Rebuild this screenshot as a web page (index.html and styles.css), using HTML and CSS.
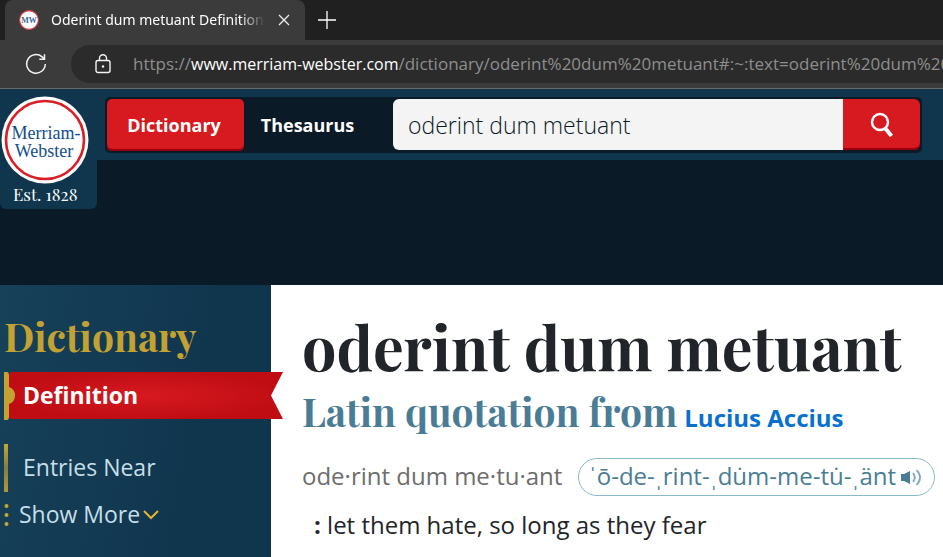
FILE: index.html
```html
<!DOCTYPE html>
<html lang="en">
<head>
<meta charset="utf-8">
<title>Oderint dum metuant Definition</title>
<link rel="stylesheet" href="styles.css">
</head>
<body>
<div class="browser">
  <div class="tabstrip">
    <div class="tab">
      <svg class="favicon" viewBox="0 0 20 20" aria-hidden="true"><circle cx="10" cy="10" r="9.4" fill="#fff" stroke="#d8393e" stroke-width="1.1"/><text class="favicon-text" x="10" y="12.8" text-anchor="middle">MW</text></svg>
      <span class="tab-title">Oderint dum metuant Definition</span>
      <button class="icon-button" aria-label="Close tab"><svg width="12" height="12" viewBox="0 0 12 12"><path d="M1 1l10 10M11 1L1 11" stroke="#eee" stroke-width="1.3"/></svg></button>
    </div>
    <button class="icon-button new-tab" aria-label="New tab"><svg width="18" height="18" viewBox="0 0 18 18"><path d="M9 0v18M0 9h18" stroke="#fff" stroke-width="1.3"/></svg></button>
  </div>
  <div class="toolbar">
    <button class="icon-button reload" aria-label="Reload"><svg width="22" height="22" viewBox="0 0 22 22" fill="none" stroke="#f4f4f4" stroke-width="1.5"><path d="M20.3 11a9.3 9.3 0 1 1-3.2-7.1l2.2 2"/><path d="M19.5 1.2v5h-5.2"/></svg></button>
    <div class="address">
      <svg class="lock" width="16" height="20" viewBox="0 0 16 20" fill="none" stroke="#f4f4f4" stroke-width="1.4"><rect x="1" y="6.5" width="14" height="12" rx="2"/><path d="M4.5 6.500V4.300a3.500 3.500 0 0 1 7 0v2.200"/><circle cx="8" cy="12.500" r="1.200" fill="#f4f4f4" stroke="none"/></svg>
      <div class="url" role="textbox" aria-label="Address" contenteditable="true" spellcheck="false">https://<span class="host">www.merriam-webster.com</span>/dictionary/oderint%20dum%20metuant#:~:text=oderint%20dum%20</div>
    </div>
  </div>
</div>

<header class="site-header">
  <a class="brand" href="#">
    <svg class="seal" viewBox="0 0 88 88" aria-label="Merriam-Webster"><circle cx="44" cy="44" r="43.500" fill="#fff"/><circle cx="44" cy="44" r="39" fill="#fff" stroke="#da1d26" stroke-width="2.600"/><text class="seal-text" x="45" y="43" text-anchor="middle">Merriam-</text><text class="seal-text" x="43" y="61" text-anchor="middle">Webster</text></svg>
    <span class="est">Est. 1828</span>
  </a>
  <form class="search-bar">
    <button type="button" class="mode active">Dictionary</button>
    <button type="button" class="mode">Thesaurus</button>
    <input class="query" type="text" aria-label="Search" value="oderint dum metuant" spellcheck="false">
    <button type="button" class="go" aria-label="Search"><svg width="24" height="26" viewBox="0 0 24 26" fill="none" stroke="#fff"><circle cx="10" cy="10" r="8" stroke-width="2.400"/><path d="M15 16l6.500 8" stroke-width="4"/></svg></button>
  </form>
</header>
<div class="band"></div>

<div class="page">
  <nav class="sidebar">
    <h2 class="side-title">Dictionary</h2>
    <a class="ribbon" href="#"><svg class="ribbon-shape" viewBox="0 0 280 48" preserveAspectRatio="none" aria-hidden="true"><defs><radialGradient id="red"><stop offset="0" stop-color="#d71920"/><stop offset="1" stop-color="#c00d14"/></radialGradient></defs><path d="M5 2Q6 0 9 0H279L267 23.500L279 47H9Q6 47 5 45z" fill="url(#red)"/><path d="M0 0h3q2 0 2 4v11a9 9 0 0 1 0 17v12q0 4-2 4H0z" fill="#c3a232"/></svg><span class="ribbon-label">Definition</span></a>
    <a class="side-link" href="#">Entries Near</a>
    <button class="show-more"><svg width="5" height="24" viewBox="0 0 5 24" fill="#c9a832"><circle cx="2.500" cy="3" r="2"/><circle cx="2.500" cy="12" r="2"/><circle cx="2.500" cy="21" r="2"/></svg><span class="more-label">Show More</span><svg width="16" height="10" viewBox="0 0 16 10" fill="none" stroke="#e0b72e" stroke-width="2"><path d="M1 1l7 7 7-7"/></svg></button>
  </nav>
  <main class="entry">
    <h1 class="headword">oderint dum metuant</h1>
    <div class="origin"><h2 class="part">Latin quotation from</h2><a class="author" href="#">Lucius Accius</a></div>
    <div class="says"><span class="syllables">ode·rint dum me·tu·ant</span><button class="pron"><span>ˈō-de-ˌrint-ˌdu̇m-me-tu̇-ˌänt</span><svg width="21" height="18" viewBox="0 0 21 18" fill="none" stroke="#7fa7ba" stroke-width="1.800"><path d="M0 6h3l6-3v13l-6-3H0z" fill="#4a7d95" stroke="none"/><path d="M12 5q3.500 4.500 0 9M15.500 2q7 7.500 0 15"/></svg></button></div>
    <p class="sense"><strong>:</strong> let them hate, so long as they fear</p>
  </main>
</div>
</body>
</html>
```
FILE: styles.css
```css
* { box-sizing: border-box; }
body { margin: 0; min-height: 100vh; display: flex; flex-direction: column; background: #0a1a26; font-family: "Open Sans", sans-serif; }
button { margin: 0; padding: 0; border: 0; background: none; font-family: inherit; cursor: pointer; }
a { text-decoration: none; }
h1, h2, p { margin: 0; }
svg { flex: none; }

.tabstrip { height: 40px; display: flex; align-items: center; background: #202020; }
.tab { width: 300px; height: 40px; margin-left: 5px; padding: 0 14px; display: flex; align-items: center; border-radius: 8px 8px 0 0; background: #3b3b3b; }
.favicon { width: 20px; height: 20px; }
.favicon-text { font: bold 8px "Liberation Serif", serif; fill: #40698d; }
.tab-title { width: 214px; margin-left: 12px; font-family: "Noto Sans", sans-serif; font-size: 14px; line-height: 20px; white-space: nowrap; overflow: hidden; color: #fff; -webkit-mask-image: linear-gradient(90deg, #000 88%, transparent); mask-image: linear-gradient(90deg, #000 88%, transparent); }
.icon-button { display: grid; place-items: center; }
.tab .icon-button { margin-left: 13px; }
.new-tab { margin-left: 13px; }
.toolbar { height: 49px; display: flex; align-items: center; border-bottom: 1px solid #686868; background: #3b3b3b; }
.reload { margin-left: 25px; }
.address { flex: 1; min-width: 0; height: 38px; margin-left: 24px; padding-left: 24px; display: flex; align-items: center; gap: 22px; overflow: hidden; border-radius: 19px 0 0 19px; background: #2b2b2b; }
.url { font-size: 17px; line-height: 24px; white-space: nowrap; color: #8e8e8e; }
.host { font-size: 16px; color: #fff; }

.site-header { position: relative; padding: 8px 21px 7px 105px; background: #10364e; }
.brand { position: absolute; top: 0; left: 0; width: 97px; height: 120px; padding-top: 7px; display: flex; flex-direction: column; border-radius: 0 0 6px 6px; background: #10364e; }
.seal { width: 88px; height: 88px; margin-left: 1px; }
.seal-text { font: 18px "Liberation Serif", serif; fill: #134d8e; }
.est { padding-left: 13px; font: 17px/20px "Playfair Display", "Liberation Serif", serif; color: #fff; }
.search-bar { height: 56px; padding: 2px; display: flex; border-radius: 5px; background: #0a1a26; }
.mode { width: 137px; height: 52px; padding-right: 3px; border-radius: 5px; font-size: 18px; font-weight: 700; color: #fff; }
.mode.active { background: #d71920; box-shadow: inset 0 -2px #98000d; }
.mode + .mode { width: 130px; }
.query { flex: 1; min-width: 0; height: 51px; margin-left: 19px; padding: 0 15px; border: 0; border-radius: 6px 0 0 6px; background: #f4f4f4; font: 300 23px "Open Sans", sans-serif; color: #0a1a26; }
.go { width: 77px; height: 51px; display: grid; place-items: center; border-radius: 0 6px 6px 0; background: #d71920; box-shadow: inset 0 -2px #98000d; }
.band { height: 125px; }

.page { flex: 1; display: flex; background: #fff; }
.sidebar { flex: none; width: 271px; padding: 27px 0 0 4px; background: linear-gradient(100deg, #164159, #10364e 70%); }
.side-title { font: 700 39px/48px "Playfair Display", "Liberation Serif", serif; color: #c3a232; }
.ribbon { position: relative; width: 280px; height: 48px; margin-top: 12px; padding: 0 0 3px 19px; display: flex; align-items: center; font-size: 23px; font-weight: 700; color: #fff; }
.ribbon-shape { position: absolute; inset: 0; width: 100%; height: 100%; }
.ribbon-label { position: relative; }
.side-link { height: 48px; margin-top: 24px; padding: 0 0 3px 15px; display: flex; align-items: center; border-left: 4px solid; border-image: linear-gradient(#c9a832, #827e43 50%, #b39a37) 1; font-size: 23px; color: #c6dee9; }
.show-more { display: flex; align-items: center; height: 46px; font-size: 23px; color: #c6dee9; }
.more-label { margin: 0 3px 0 10px; padding-bottom: 3px; }

.entry { flex: 1; min-width: 0; padding: 31px 8px 0 31px; white-space: nowrap; }
.headword { font: 700 61px/60px "Playfair Display", "Liberation Serif", serif; color: #212529; }
.origin { margin-top: 9px; display: flex; align-items: baseline; gap: 7px; }
.part { font: 700 39px/52px "Playfair Display", "Liberation Serif", serif; color: #4a7d95; }
.author { font-size: 24px; font-weight: 700; line-height: 32px; color: #0870cf; }
.says { margin-top: 21px; display: flex; align-items: center; justify-content: space-between; font-size: 24px; line-height: 36px; color: #6d6d6d; }
.syllables { padding-bottom: 2px; }
.pron { height: 38px; padding: 0 12px 0 10px; display: flex; align-items: center; gap: 5px; border: 1px solid #8ab9cc; border-radius: 19px; font-size: 24px; line-height: 32px; color: #4a7d95; }
.pron span { padding-bottom: 3px; }
.sense { margin: 11px 0 0 12px; font-size: 24px; line-height: 36px; color: #212529; }
```
